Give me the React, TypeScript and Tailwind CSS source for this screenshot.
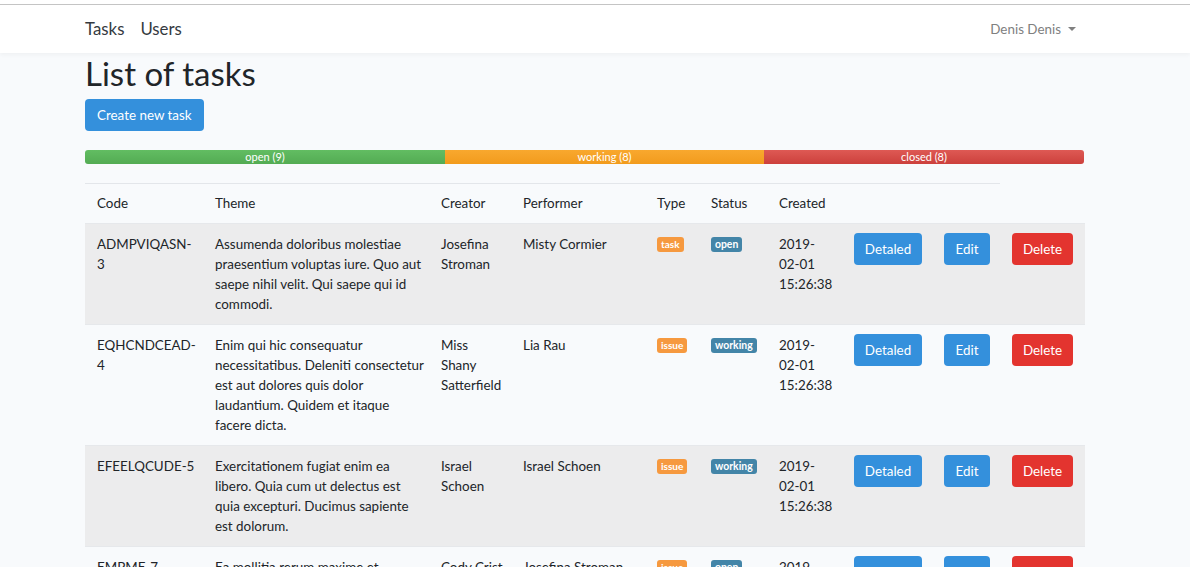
import React from 'react';

interface Task {
  code: string[];
  theme: string[];
  creator: string[];
  performer: string;
  type: string;
  status: string;
}

const TASKS: Task[] = [
  {
    code: ['ADMPVIQASN-', '3'],
    theme: ['Assumenda doloribus molestiae', 'praesentium voluptas iure. Quo aut', 'saepe nihil velit. Qui saepe qui id', 'commodi.'],
    creator: ['Josefina', 'Stroman'],
    performer: 'Misty Cormier',
    type: 'task',
    status: 'open',
  },
  {
    code: ['EQHCNDCEAD-', '4'],
    theme: ['Enim qui hic consequatur', 'necessitatibus. Deleniti consectetur', 'est aut dolores quis dolor', 'laudantium. Quidem et itaque', 'facere dicta.'],
    creator: ['Miss', 'Shany', 'Satterfield'],
    performer: 'Lia Rau',
    type: 'issue',
    status: 'working',
  },
  {
    code: ['EFEELQCUDE-5'],
    theme: ['Exercitationem fugiat enim ea', 'libero. Quia cum ut delectus est', 'quia excepturi. Ducimus sapiente', 'est dolorum.'],
    creator: ['Israel', 'Schoen'],
    performer: 'Israel Schoen',
    type: 'issue',
    status: 'working',
  },
  {
    code: ['EMPME-7'],
    theme: ['Ea mollitia rerum maxime et', 'voluptatem.'],
    creator: ['Cody Crist'],
    performer: 'Josefina Stroman',
    type: 'issue',
    status: 'open',
  },
];

function Lines({ lines }: { lines: string[] }) {
  return (
    <>
      {lines.map((l, i) => (
        <div key={i} className="whitespace-nowrap">{l}</div>
      ))}
    </>
  );
}

export default function App() {
  return (
    <div className="min-h-[567px] bg-[#f8fafc] text-[#212529] font-['Lato','Liberation_Sans',sans-serif]">
      {/* Navbar */}
      <div className="bg-white shadow-[0_2px_4px_rgba(0,0,0,0.04)]">
        <div className="h-[4px]" />
        <div className="border-t border-[#c4c4c4]">
          <div className="ml-[85px] w-[999px] h-[48px] flex items-center justify-between">
            <div className="flex items-center gap-[16px] text-[16.8px] text-[#343a40]">
              <span>Tasks</span>
              <span>Users</span>
            </div>
            <div className="flex items-center gap-[7px] text-[13.4px] text-[#808080] pr-[8px]">
              <span>Denis Denis</span>
              <span className="w-0 h-0 border-l-[4px] border-r-[4px] border-t-[4px] border-l-transparent border-r-transparent border-t-[#808080]" />
            </div>
          </div>
        </div>
      </div>

      <div className="ml-[85px] w-[999px]">
        <h1 className="text-[33px] leading-[40px] mt-0 mb-[6px] font-normal">List of tasks</h1>
        <button className="h-[32px] px-[12px] rounded-[4px] bg-[#3490dc] text-white text-[13.4px]">
          Create new task
        </button>

        {/* Progress */}
        <div className="mt-[19px] h-[14px] flex rounded-[3px] overflow-hidden text-[11px] leading-[14px] text-white">
          <div className="w-[360px] text-center bg-linear-to-b from-[#62bd62] to-[#53ab53]">open (9)</div>
          <div className="w-[319px] text-center bg-linear-to-b from-[#f9a82e] to-[#f29b1c]">working (8)</div>
          <div className="flex-1 text-center bg-linear-to-b from-[#de5954] to-[#cc403c]">closed (8)</div>
        </div>

        {/* Table */}
        <table className="mt-[19px] w-[1000px] table-fixed border-collapse text-[13.4px] leading-[20px]">
          <colgroup>
            <col className="w-[118px]" />
            <col className="w-[226px]" />
            <col className="w-[82px]" />
            <col className="w-[134px]" />
            <col className="w-[54px]" />
            <col className="w-[68px]" />
            <col className="w-[75px]" />
            <col className="w-[90px]" />
            <col className="w-[68px]" />
            <col className="w-[85px]" />
          </colgroup>
          <thead>
            <tr className="text-left">
              {['Code', 'Theme', 'Creator', 'Performer', 'Type', 'Status', 'Created', '', ''].map((h, i) => (
                <th key={i} className="font-normal px-[12px] pt-[9px] pb-[10px] border-t border-[#e3e6ea]">{h}</th>
              ))}
              <th />
            </tr>
          </thead>
          <tbody>
            {TASKS.map((t, i) => (
              <tr key={i} className={`align-top border-t border-[#e6e8eb] ${i % 2 === 0 ? 'bg-[#ececed]' : ''}`}>
                <td className="px-[12px] py-[10px]"><Lines lines={t.code} /></td>
                <td className="px-[12px] py-[10px]"><Lines lines={t.theme} /></td>
                <td className="px-[12px] py-[10px]"><Lines lines={t.creator} /></td>
                <td className="px-[12px] py-[10px] whitespace-nowrap">{t.performer}</td>
                <td className="px-[12px] py-[10px]">
                  <span className="inline-block mt-[3px] px-[4px] h-[15px] leading-[15px] rounded-[3px] bg-[#f6993f] text-white text-[10px] font-bold align-top">{t.type}</span>
                </td>
                <td className="px-[12px] py-[10px]">
                  <span className="inline-block mt-[3px] px-[4px] h-[15px] leading-[15px] rounded-[3px] bg-[#4385a8] text-white text-[10.4px] font-bold align-top">{t.status}</span>
                </td>
                <td className="px-[12px] py-[10px]"><Lines lines={['2019-', '02-01', '15:26:38']} /></td>
                <td className="px-[12px] py-[9px]">
                  <button className="h-[32px] w-[68px] rounded-[4px] bg-[#3490dc] text-white">Detaled</button>
                </td>
                <td className="px-[12px] py-[9px]">
                  <button className="h-[32px] w-[46px] rounded-[4px] bg-[#3490dc] text-white">Edit</button>
                </td>
                <td className="pl-[12px] pr-[12px] py-[9px]">
                  <button className="h-[32px] w-[61px] rounded-[4px] bg-[#e3342f] text-white">Delete</button>
                </td>
              </tr>
            ))}
          </tbody>
        </table>
      </div>
    </div>
  );
}
